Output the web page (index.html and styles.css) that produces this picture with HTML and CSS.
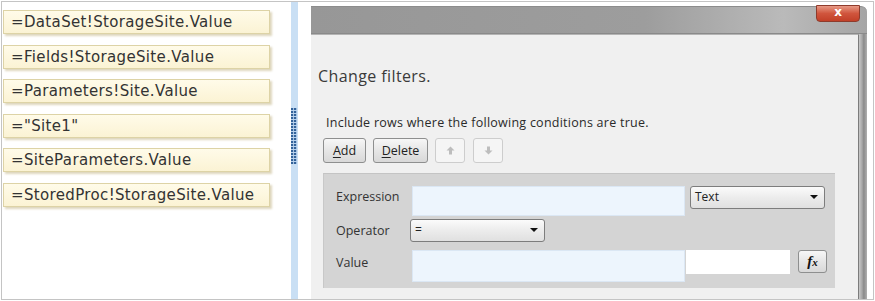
FILE: index.html
```html
<!DOCTYPE html>
<html lang="en">
<head>
    <meta charset="UTF-8">
    <meta name="viewport" content="width=device-width, initial-scale=1.0">
    <title>Change filters</title>
    <link rel="stylesheet" href="styles.css">
</head>
<body>
    <div class="frame">
        <ul class="fields">
            <li>=DataSet!StorageSite.Value</li>
            <li>=Fields!StorageSite.Value</li>
            <li>=Parameters!Site.Value</li>
            <li>="Site1"</li>
            <li>=SiteParameters.Value</li>
            <li>=StoredProc!StorageSite.Value</li>
        </ul>

        <div class="splitter"><span class="grip"></span></div>

        <div class="window">
            <div class="titlebar">
                <span class="close">x</span>
            </div>
            <div class="window-inner">
                <div class="dialog-body">
                    <h2>Change filters.</h2>
                    <p>Include rows where the following conditions are true.</p>

                    <div class="toolbar">
                        <button class="btn btn-add"><u>A</u>dd</button>
                        <button class="btn btn-delete"><u>D</u>elete</button>
                        <button class="btn btn-icon" disabled>
                            <svg width="9" height="9" viewBox="0 0 9 9"><path d="M4.5 0.5 L8.5 4.5 H6 V8.5 H3 V4.5 H0.5 Z" fill="#bdbdbd"/></svg>
                        </button>
                        <button class="btn btn-icon" disabled>
                            <svg width="9" height="9" viewBox="0 0 9 9"><path d="M4.5 8.5 L8.5 4.5 H6 V0.5 H3 V4.5 H0.5 Z" fill="#bdbdbd"/></svg>
                        </button>
                    </div>

                    <div class="filter">
                        <div class="row row-expr">
                            <label>Expression</label>
                            <div class="input"></div>
                            <div class="select select-type">Text<span class="arrow"></span></div>
                        </div>
                        <div class="row row-op">
                            <label>Operator</label>
                            <div class="select select-op">=<span class="arrow"></span></div>
                        </div>
                        <div class="row row-value">
                            <label>Value</label>
                            <div class="input"></div>
                            <div class="plain-box"></div>
                            <button class="btn btn-fx"><i>f</i><span>x</span></button>
                        </div>
                    </div>
                </div>
                <div class="edge"></div>
            </div>
        </div>
    </div>
</body>
</html>
```

FILE: styles.css
```css
body {
    margin: 0;
    background-color: #fff;
    font-family: 'Open Sans', sans-serif;
}

.frame {
    margin: 1px 0 0 1px;
    width: 873px;
    height: 299px;
    box-sizing: border-box;
    border: 1px solid #c4c4c4;
    display: flex;
    overflow: hidden;
}

/* left list of expressions */
.fields {
    list-style: none;
    margin: 0;
    padding: 8px 0 0 1px;
    width: 288px;
    box-sizing: border-box;
    display: flex;
    flex-direction: column;
    gap: 10.6px;
}

.fields li {
    width: 267px;
    height: 24px;
    box-sizing: border-box;
    padding-left: 7px;
    border: 1px solid #ddd3a6;
    background: linear-gradient(#fffbe9, #fbf3d4);
    box-shadow: 2px 2px 2px rgba(160, 140, 70, 0.35);
    font-family: 'DejaVu Sans', sans-serif;
    font-size: 15px;
    letter-spacing: 0.35px;
    line-height: 22px;
    color: #333;
    white-space: nowrap;
}

.splitter {
    margin-left: 1px;
    width: 7px;
    background-color: #c9dff4;
    padding-top: 106px;
}

.grip {
    display: block;
    width: 6px;
    height: 56px;
    background:
        repeating-linear-gradient(to right, transparent 0 2px, rgba(190, 214, 240, 0.8) 2px 3px),
        repeating-linear-gradient(to bottom, #32629a 0 2px, #b7d1ed 2px 3px);
}

/* dialog window */
.window {
    margin: 4px 0 0 13px;
    width: 556px;
    display: flex;
    flex-direction: column;
    position: relative;
}

.titlebar {
    height: 28px;
    box-sizing: border-box;
    border-top: 1px solid #8c8c8c;
    border-bottom: 1px solid #8a8a8a;
    background: linear-gradient(to right, #979797 0%, #9d9d9d 60%, #bababa 85%, #a5a5a5 100%);
    border-radius: 0 6px 0 0;
}

.close {
    position: absolute;
    top: -1px;
    right: 7px;
    width: 44px;
    height: 17px;
    box-sizing: border-box;
    border: 1px solid #8e3b2c;
    border-radius: 0 0 4px 4px;
    background: linear-gradient(#e79985, #d0553d 50%, #c24028);
    color: #fff;
    font-family: 'DejaVu Sans', sans-serif;
    font-weight: bold;
    font-size: 12px;
    line-height: 13px;
    text-align: center;
}

.window-inner {
    flex: 1;
    display: flex;
}

.dialog-body {
    flex: 1;
    background-color: #f0f0f0;
    border-top: 1px solid #b4b4b4;
    border-right: 1px solid #7c7c7c;
}

.edge {
    width: 8px;
    background: linear-gradient(to right, #c9c9c9, #a5a5a5 40%, #8a8a8a 60%, #b0b0b0);
}

h2 {
    margin: 31px 0 0 7px;
    font-size: 16px;
    letter-spacing: 0.4px;
    font-weight: normal;
    line-height: 20px;
    color: #3a3a3a;
}

p {
    margin: 29px 0 0 15px;
    font-size: 12.5px;
    letter-spacing: 0.25px;
    line-height: 16px;
    color: #2a2a2a;
}

.toolbar {
    margin: 7px 0 0 12px;
    display: flex;
    gap: 7px;
}

.btn {
    height: 25px;
    padding: 0;
    border: 1px solid #8e8f8f;
    border-radius: 3px;
    background: linear-gradient(#f7f7f7, #e6e6e6 50%, #d8d8d8);
    font-family: 'Open Sans', sans-serif;
    font-size: 12.5px;
    color: #222;
}

.btn u {
    text-underline-offset: 2px;
}

.btn-add {
    width: 43px;
}

.btn-delete {
    width: 55px;
}

.btn-icon {
    width: 30px;
    border-color: #cdcdcd;
    background: #f5f5f5;
    display: flex;
    align-items: center;
    justify-content: center;
}

.btn-icon + .btn-icon {
    margin-left: 1px;
}

/* filter condition area */
.filter {
    margin: 10px 0 0 12px;
    width: 512px;
    height: 115px;
    box-sizing: border-box;
    padding: 12px 0 0 12px;
    background-color: #d4d4d4;
    border-top: 1px solid #c4c4c4;
    border-left: 1px solid #c8c8c8;
}

.row {
    display: flex;
    align-items: flex-start;
}

.row label {
    width: 76px;
    flex: none;
    font-size: 12.5px;
    color: #333;
}

.row-expr label {
    line-height: 22px;
}

.row-op {
    margin-top: 3px;
}

.row-op label {
    line-height: 24px;
}

.row-value {
    margin-top: 7px;
}

.row-value label {
    line-height: 26px;
}

.input {
    width: 273px;
    height: 30px;
    box-sizing: border-box;
    border: 1px solid #dbe7f4;
    background-color: #edf5fd;
}

.row-value .input {
    height: 32px;
}

.select {
    position: relative;
    height: 23px;
    box-sizing: border-box;
    border: 1px solid #7d7d7d;
    border-radius: 3px;
    background: linear-gradient(#fbfbfb, #ececec 50%, #e0e0e0);
    padding-left: 4px;
    font-size: 12px;
    line-height: 20px;
    color: #222;
}

.select-type {
    width: 135px;
    margin-left: 5px;
}

.select-op {
    width: 135px;
    margin-left: -2px;
}

.arrow {
    position: absolute;
    right: 6px;
    top: 8px;
    border-left: 4px solid transparent;
    border-right: 4px solid transparent;
    border-top: 4px solid #111;
}

.plain-box {
    width: 104px;
    height: 24px;
    margin-left: 1px;
    background-color: #fff;
}

.btn-fx {
    width: 29px;
    height: 23px;
    margin-left: 8px;
    font-family: 'Liberation Serif', serif;
    font-weight: bold;
    color: #111;
}

.btn-fx i {
    font-size: 15px;
}

.btn-fx span {
    font-size: 11px;
    font-style: italic;
}
```
